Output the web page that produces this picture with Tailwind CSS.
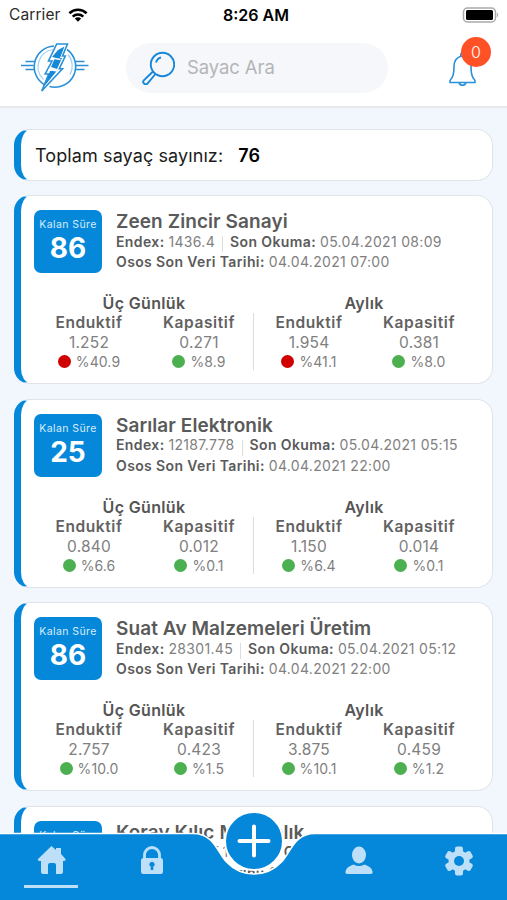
<!DOCTYPE html>
<html lang="tr">
<head>
  <meta charset="UTF-8">
  <meta name="viewport" content="width=device-width, initial-scale=1.0">
  <title>Sayaç Listesi</title>
  <script src="https://cdn.jsdelivr.net/npm/@tailwindcss/browser@4"></script>
</head>
<body class="bg-[#f2f7fe] font-['Inter',sans-serif]">
  <div class="relative h-[900px] w-[507px] overflow-hidden">

    <header class="h-[108px] bg-white border-b-2 border-[#e6e8ec]">
      <!-- Status bar -->
      <div class="grid grid-cols-3 items-center h-[30px] pl-[9px] pr-2">
        <div class="flex items-center gap-[7px] text-[15.5px] text-[#2b2b2b]">
          <span class="tracking-[0.1px]">Carrier</span>
          <svg class="w-5 h-[14px]" viewBox="0 0 20 14" fill="none" stroke="#000" stroke-width="2.6">
            <path d="M1.4 5.2a12.4 12.4 0 0 1 17.2 0M4.7 8.6a7.8 7.8 0 0 1 10.6 0"/>
            <path d="M10 13.8l-3.2-3.2a4.6 4.6 0 0 1 6.4 0z" fill="#000" stroke="none"/>
          </svg>
        </div>
        <span class="text-center text-[16px] font-semibold text-black pl-1">8:26 AM</span>
        <svg class="justify-self-end w-[37px] h-4" viewBox="0 0 37 16">
          <rect x="1.5" y="1" width="32" height="14" rx="4" fill="#fff" stroke="#a9a9a9" stroke-width="1.5"/>
          <rect x="4" y="3" width="27" height="10" rx="1.5" fill="#000"/>
          <path d="M35 5.500q2.400 2.500 0 5z" fill="#a9a9a9"/>
        </svg>
      </div>

      <div class="flex items-center h-[75px] pl-[21px] pr-[16px]">
        <svg class="w-[68px] h-[50px] shrink-0" viewBox="0 0 68 50" fill="none" stroke="#2a91d8" stroke-width="1.6">
          <path d="M4.500 18.500h9M0 22.500h12.500M4.500 26.500h8.500M54.500 18.500h9M55 22.500h12.500M55 26.500h8.500"/>
          <path d="M33 3a20.800 20.800 0 0 0-9 39M46 6.500a20.800 20.800 0 0 1-17.500 37"/>
          <path d="M32 6.500a17.500 17.500 0 0 0-9.500 30M47 11.500a17.500 17.500 0 0 1 2 20" stroke="#a3d2f4" stroke-width="1.200"/>
          <path d="M35.700 1h10.800l-5 12h2.800l-6 12.700h3.200L20.700 48l7-17h-3.500L31 18h-3.500z" fill="#fff"/>
          <path d="M37 7l6.500-3.500-4.500 11.500h2L36 26l-6-2 4-9-3-1zM29 28l7.500-1L23.500 43z" fill="#1588d8" stroke="none"/>
          <path d="M31 15l8.500 1.500M27.500 26.500l9 1.500" stroke="#fff" stroke-width="1.300"/>
        </svg>
        <div class="flex items-center ml-[37px] w-[262px] h-[50px] rounded-full bg-[#f5f7fa] pl-[16px] gap-[12px]">
          <svg class="w-[33px] h-[34px]" viewBox="0 0 33 34" fill="none" stroke="#1687d9" stroke-width="1.9">
            <circle cx="20.500" cy="13.500" r="11.700"/>
            <path d="M11 20.500L1.800 29.300a2.200 2.200 0 0 0 3.800 3L13.500 23M14 11.500a7 7 0 0 1 5-5"/>
          </svg>
          <span class="text-[18.5px] tracking-[-0.1px] text-[#b4b5b8]">Sayac Ara</span>
        </div>
        <div class="relative ml-auto w-[42px] h-[50px]">
          <svg class="absolute left-0 top-[9px] w-[27px] h-[35px]" viewBox="0 0 27 35" fill="none" stroke="#2b8fda" stroke-width="1.600">
            <path d="M13.500 4C7.500 5 5 9 5 14.500c0 8-1 10.500-3 12.500-1 1-1.200 2-1 3.500h25c.2-1.500 0-2.500-1-3.500-2-2-3-4.500-3-12.500C22 9 19.500 5 13.500 4zM10 30.500a3.600 3.600 0 0 0 7 0M11.800 4.500V2.500a1.700 1.700 0 0 1 3.400 0v2"/>
          </svg>
          <span class="absolute -top-[6px] right-0 w-[30px] h-[30px] rounded-full bg-[#ff5126] text-white text-[16px] leading-[30px] text-center font-light">0</span>
        </div>
      </div>
    </header>

    <main class="flex flex-col gap-[14px] px-[14px] pt-[21px]">
      <section class="flex items-center h-[52px] rounded-[16px] bg-white pl-[14px] text-[18px] tracking-[0.1px] text-[#1c1c1c] border border-[#e0e4ea] border-l-[7px] border-l-[#0588da]">
        <span>Toplam sayaç sayınız:</span>
        <b class="ml-[15px] font-semibold text-black">76</b>
      </section>
      <div id="list" class="flex flex-col gap-[14.5px]"></div>
    </main>

    <!-- Tab bar -->
    <nav class="absolute inset-x-0 bottom-0 h-[92px]">
      <svg class="absolute inset-0 w-full h-full" viewBox="0 0 507 92">
        <path d="M-3 25.500H193C214 25.500 217 44 226 53.500C234 62 242 66 254 66S274 62 282 53.500C291 44 294 25.500 315 25.500H510V95H-3z" fill="#0588da" stroke="#fff" stroke-width="1.500"/>
        <circle cx="254" cy="33" r="29" fill="#0588da" stroke="#fff" stroke-width="2"/>
        <path d="M254 18.500v29M239.500 33h29" stroke="#fff" stroke-width="4" stroke-linecap="round"/>
      </svg>
      <div class="relative flex h-full pt-[38px] px-[1px] text-[#bde0f8]">
        <div class="w-[100px] flex flex-col items-center gap-[10px]">
          <svg class="w-[29px] h-[29px]" viewBox="0 0 29 29" fill="currentColor">
            <path d="M14.500 0L19 4V2h5v6l4.500 5q.5 2-2.500 2v11q0 2-2 2h-5v-9q0-2-2-2h-4q-2 0-2 2v9H6q-2 0-2-2V15q-4 0-3-2z"/>
          </svg>
          <div class="w-[54px] h-[2.500px] bg-[#bde0f8]"></div>
        </div>
        <div class="w-[101px] flex justify-center">
          <svg class="w-[22px] h-[28px]" viewBox="0 0 22 28">
            <path d="M3.500 13V9a7.500 7.500 0 0 1 15 0v4" fill="none" stroke="currentColor" stroke-width="2.800"/>
            <rect y="12" width="22" height="16" rx="2.500" fill="currentColor"/>
            <path d="M9.700 24v-3.500a2.500 2.500 0 1 1 2.600 0V24z" fill="#0588da"/>
          </svg>
        </div>
        <div class="w-[106px]"></div>
        <div class="w-[101px] flex justify-center">
          <svg class="w-[28px] h-[28px]" viewBox="0 0 28 28" fill="currentColor">
            <ellipse cx="14" cy="9" rx="7" ry="8.500"/>
            <path d="M2.500 28Q0 28 .5 25.500 1 21 8.500 18.500q5.500 3 11 0 7.500 2.500 8 7 .5 2.500-2 2.500z"/>
          </svg>
        </div>
        <div class="grow flex justify-center pl-[3px]">
          <svg class="w-[30px] h-[30px]" viewBox="0 0 30 30">
            <g fill="currentColor">
              <circle cx="15" cy="15" r="10.500"/>
              <rect x="11" y="0.500" width="8" height="29" rx="2"/>
              <rect x="11" y="0.500" width="8" height="29" rx="2" transform="rotate(60 15 15)"/>
              <rect x="11" y="0.500" width="8" height="29" rx="2" transform="rotate(120 15 15)"/>
            </g>
            <circle cx="15" cy="15" r="5" fill="#0588da"/>
          </svg>
        </div>
      </div>
    </nav>
  </div>

  <script>
    const meters = [
      { gun: 86, ad: "Zeen Zincir Sanayi", endex: "1436.4", okuma: "05.04.2021 08:09", veri: "04.04.2021 07:00",
        olcum: [["1.252", "%40.9", true], ["0.271", "%8.9"], ["1.954", "%41.1", true], ["0.381", "%8.0"]] },
      { gun: 25, ad: "Sarılar Elektronik", endex: "12187.778", okuma: "05.04.2021 05:15", veri: "04.04.2021 22:00",
        olcum: [["0.840", "%6.6"], ["0.012", "%0.1"], ["1.150", "%6.4"], ["0.014", "%0.1"]] },
      { gun: 86, ad: "Suat Av Malzemeleri Üretim", endex: "28301.45", okuma: "05.04.2021 05:12", veri: "04.04.2021 22:00",
        olcum: [["2.757", "%10.0"], ["0.423", "%1.5"], ["3.875", "%10.1"], ["0.459", "%1.2"]] },
      { gun: 86, ad: "Koray Kılıç Mobdalık", endex: "108345.13", okuma: "05.04.2021 05:10", veri: "04.04.2021 22:00" }
    ];

    const column = (title, [value, percent, alarm]) => `
      <div class="w-[110px] flex flex-col items-center">
        <b class="text-[15.5px] leading-[20px] font-semibold tracking-[0.6px] text-[#626262]">${title}</b>
        <span class="text-[15.5px] leading-[19px] tracking-[0.2px]">${value}</span>
        <span class="flex items-center gap-[5px] text-[14px] leading-[19px] tracking-[0.1px]">
          <i class="w-[13px] h-[13px] rounded-full ${alarm ? "bg-[#d00000]" : "bg-[#4caf50]"}"></i>${percent}
        </span>
      </div>`;

    const group = (title, a, b) => `
      <div class="flex flex-col items-center">
        <b class="text-[16px] leading-[19px] font-semibold tracking-[0.35px] text-[#555]">${title}</b>
        <div class="flex">${column("Enduktif", a)}${column("Kapasitif", b)}</div>
      </div>`;

    document.getElementById("list").innerHTML = meters.map(m => `
      <section class="h-[189px] rounded-[16px] bg-white pl-[13px] pt-[14px] text-[#808080] border border-[#e0e4ea] border-l-[7px] border-l-[#0588da]">
        <div class="flex gap-[14px] h-[84px]">
          <div class="w-[68px] h-[63px] rounded-[7px] bg-[#0588da] text-white text-center pt-[8px]">
            <p class="text-[10.5px] leading-[14px] tracking-[0.4px] text-[#d5ecfb]">Kalan Süre</p>
            <p class="text-[28px] leading-[33px] font-bold">${m.gun}</p>
          </div>
          <div class="text-[14px] leading-5 tracking-[0.32px] whitespace-nowrap">
            <h2 class="text-[19px] leading-[23px] font-semibold tracking-[0.08px] text-[#5a5a5a]">${m.ad}</h2>
            <p class="flex items-center -mt-[2px]"><b class="font-semibold tracking-[0.38px] text-[#5a5a5a] mr-[4px]">Endex:</b> ${m.endex}<i class="w-px h-4 mt-[5px] bg-[#ddd] mx-[7px]"></i><b class="font-semibold tracking-[0.38px] text-[#5a5a5a] mr-[4px]">Son Okuma:</b> ${m.okuma}</p>
            <p class="flex"><b class="font-semibold tracking-[0.38px] text-[#5a5a5a] mr-[4px]">Osos Son Veri Tarihi:</b> ${m.veri}</p>
          </div>
        </div>
        ${m.olcum ? `
        <div class="flex">
          ${group("Üç Günlük", m.olcum[0], m.olcum[1])}
          <div class="w-px h-[57px] mt-[19px] -ml-[1px] bg-[#ddd]"></div>
          ${group("Aylık", m.olcum[2], m.olcum[3])}
        </div>` : ""}
      </section>`).join("");
  </script>
</body>
</html>
